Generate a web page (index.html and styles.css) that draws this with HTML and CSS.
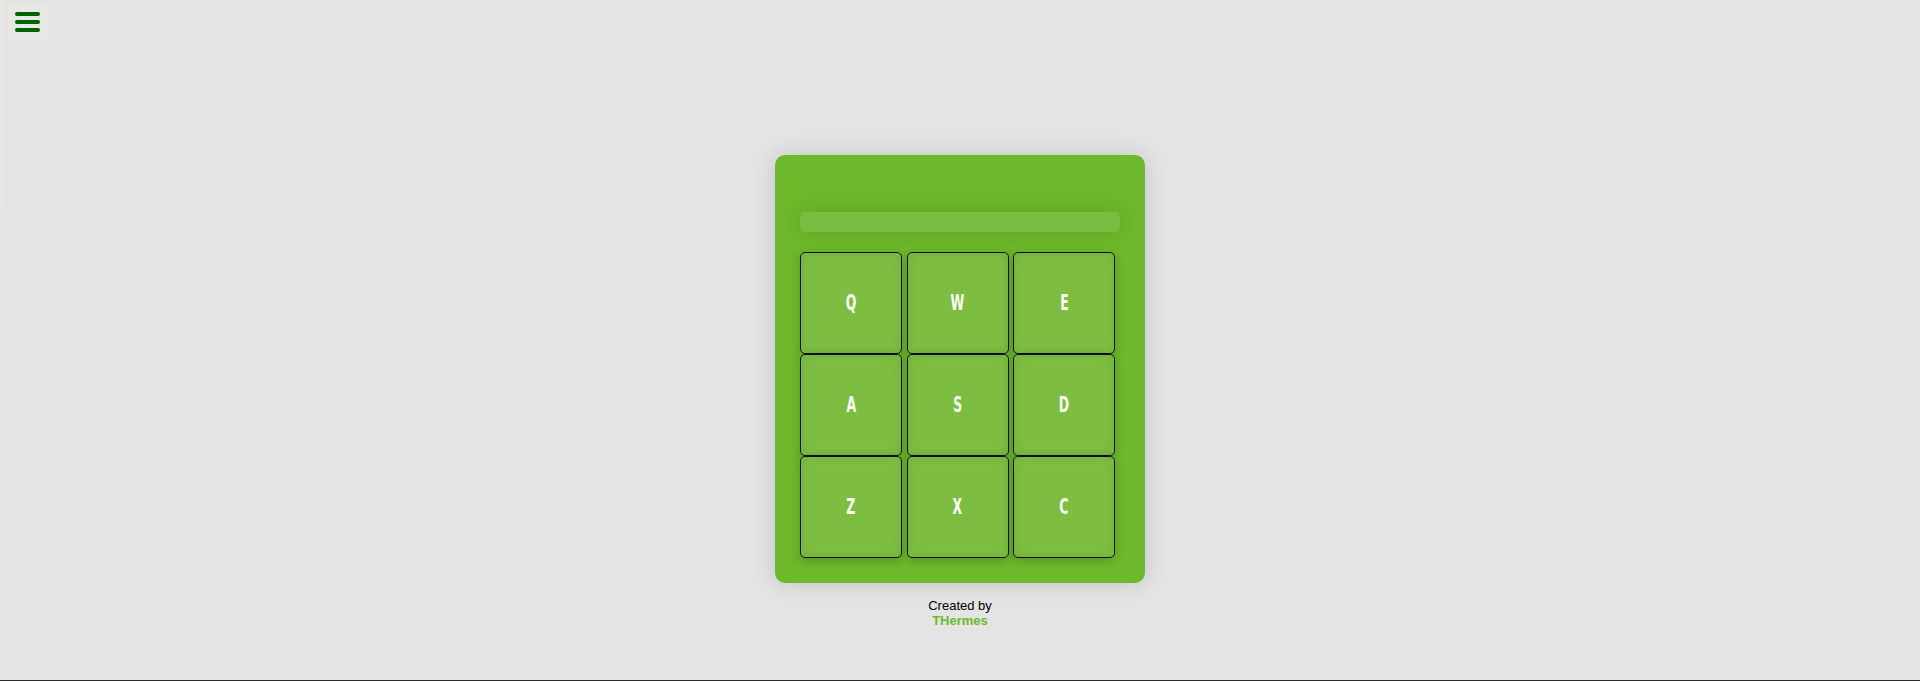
FILE: index.html
```html
<!DOCTYPE html>
<html lang="en">
<head>
<meta charset="utf-8">
<title>Drum Kit</title>
<link rel="stylesheet" href="styles.css">
</head>
<body>
<aside class="sidebar">
  <button class="menu-btn" aria-label="Menu">
    <svg width="25" height="20" viewBox="0 0 25 20" aria-hidden="true">
      <rect x="0" y="0" width="25" height="4" rx="2" fill="#006400"/>
      <rect x="0" y="8" width="25" height="4" rx="2" fill="#006400"/>
      <rect x="0" y="16" width="25" height="4" rx="2" fill="#006400"/>
    </svg>
  </button>
</aside>
<main class="page">
  <section class="machine" id="drum-machine">
    <div class="display" id="display"></div>
    <div class="pads">
      <div class="pad"><span class="key">Q</span></div>
      <div class="pad"><span class="key">W</span></div>
      <div class="pad"><span class="key">E</span></div>
      <div class="pad"><span class="key">A</span></div>
      <div class="pad"><span class="key">S</span></div>
      <div class="pad"><span class="key">D</span></div>
      <div class="pad"><span class="key">Z</span></div>
      <div class="pad"><span class="key">X</span></div>
      <div class="pad"><span class="key">C</span></div>
    </div>
  </section>
  <footer class="credit">
    <div class="credit-line">Created by</div>
    <div class="credit-name">THermes</div>
  </footer>
</main>
</body>
</html>
```

FILE: styles.css
```css
html, body {
  height: 100%;
}
body {
  margin: 0;
  background: #e4e4e4;
  font-family: "Liberation Sans", Arial, sans-serif;
  box-sizing: border-box;
  border-bottom: 1px solid #2b2b2b;
  overflow: hidden;
}
.sidebar {
  position: fixed;
  left: 0;
  top: 0;
  width: 3px;
  height: 210px;
  background: #e7e7e5;
}
.menu-btn {
  position: absolute;
  left: 8px;
  top: 6px;
  width: 39px;
  height: 34px;
  padding: 6px 0 0 7px;
  box-sizing: border-box;
  border: none;
  background: #e8e8e5;
  display: flex;
  align-items: flex-start;
  cursor: pointer;
}
.menu-btn svg { display: block; }
.page {
  display: flex;
  flex-direction: column;
  align-items: center;
  padding-top: 155px;
}
.machine {
  width: 370px;
  height: 428px;
  box-sizing: border-box;
  padding: 57px 30px 25px 25px;
  background: #6db82b;
  border-radius: 10px;
  box-shadow: 0 0 22px rgba(0, 0, 0, 0.15);
}
.display {
  width: 320px;
  height: 20px;
  background: #7bbd42;
  border-radius: 5px;
  box-shadow: 0 0 22px rgba(0, 0, 0, 0.12);
  margin-bottom: 20px;
}
.pads {
  width: 315px;
  display: grid;
  grid-template-columns: repeat(3, 102px);
  grid-auto-rows: 102px;
  justify-content: space-between;
}
.pad {
  box-sizing: border-box;
  border: 1px solid #111;
  border-radius: 5px;
  background: #7dbe42;
  box-shadow: inset 0 0 12px rgba(0, 0, 0, 0.08), 0 3px 10px rgba(0, 0, 0, 0.2);
  display: flex;
  align-items: center;
  justify-content: center;
}
.key {
  display: inline-block;
  color: #ffffff;
  font-family: "DejaVu Sans Condensed", "DejaVu Sans", sans-serif;
  font-weight: bold;
  font-size: 21px;
  line-height: 1;
  transform: scaleX(0.66);
}
.credit {
  margin-top: 15px;
  text-align: center;
  font-size: 13px;
  line-height: 15px;
}
.credit-line { color: #000; }
.credit-name {
  color: #6db82b;
  font-weight: bold;
}
```
